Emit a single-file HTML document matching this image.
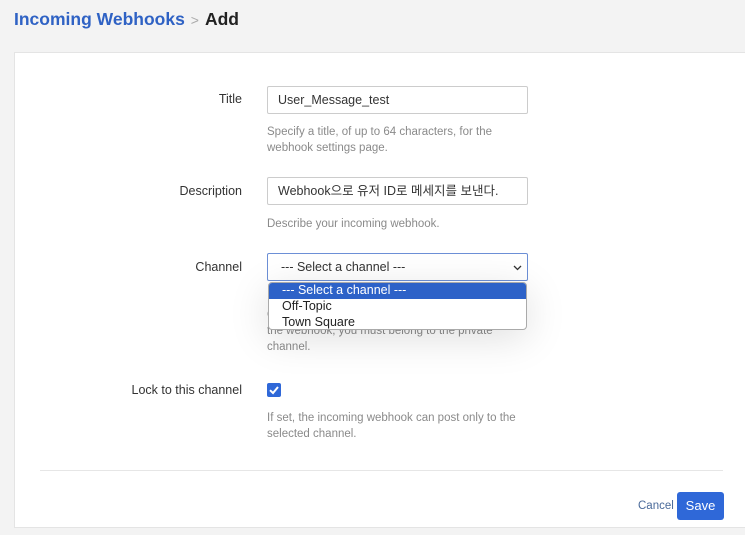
<!DOCTYPE html>
<html><head><meta charset="utf-8"><style>
*{box-sizing:border-box;margin:0;padding:0}
body{width:745px;height:535px;background:#f3f3f3;font-family:"Liberation Sans","Noto Sans CJK KR",sans-serif;position:relative;overflow:hidden;color:#3d3c40}
.a{position:absolute}
.crumb{left:14px;top:9px;font-size:17.5px;font-weight:bold;color:#2f62c4;white-space:nowrap}
.crumb .sep{color:#aaa;font-weight:normal;margin:0 6px 0 6px;font-size:14px}
.crumb .add{color:#222}
.panel{left:14px;top:52px;width:740px;height:476px;background:#fff;border:1px solid #e4e4e4}
.lbl{font-size:12.5px;color:#333;right:503px;text-align:right;white-space:nowrap}
.inp{left:267px;width:261px;height:28px;border:1px solid #ccc;border-radius:2px;font-size:12.5px;line-height:26px;padding:0 10px;color:#333;background:#fff;white-space:nowrap}
.help{left:267px;width:270px;font-size:11.5px;line-height:16px;color:#8a8a8a;white-space:nowrap}
</style></head><body>
<div class="a crumb">Incoming Webhooks<span class="sep">&gt;</span><span class="add">Add</span></div>
<div class="a panel"></div>
<div class="a lbl" style="top:92px">Title</div>
<div class="a inp" style="top:86px">User_Message_test</div>
<div class="a help" style="top:124px">Specify a title, of up to 64 characters, for the<br>webhook settings page.</div>
<div class="a lbl" style="top:184px">Description</div>
<div class="a inp" style="top:177px">Webhook으로 유저 ID로 메세지를 보낸다.</div>
<div class="a help" style="top:216px">Describe your incoming webhook.</div>
<div class="a lbl" style="top:260px">Channel</div>
<div class="a help" style="top:307px">Only public channels can be used. For private,<br>the webhook, you must belong to the private<br>channel.</div>
<div class="a inp" style="top:253px;border-color:#6c8fd6;padding-left:13px">--- Select a channel ---
<svg style="position:absolute;right:5px;top:11px" width="9" height="6" viewBox="0 0 9 6"><path d="M1 1L4.5 4.5L8 1" stroke="#333" stroke-width="1.3" fill="none"/></svg></div>
<div class="a" style="left:268px;top:282px;width:259px;height:48px;background:#fff;border:1px solid #aaa;border-radius:4px;font-size:12.5px;line-height:15.5px;overflow:hidden;box-shadow:0 8px 40px rgba(0,0,0,0.13)">
<div style="background:#2d62c8;color:#fff;padding-left:13px;height:16px">--- Select a channel ---</div>
<div style="padding-left:13px;color:#222">Off-Topic</div>
<div style="padding-left:13px;color:#222">Town Square</div>
</div>
<div class="a lbl" style="top:383px">Lock to this channel</div>
<div class="a" style="left:267px;top:383px;width:14px;height:14px;background:#2f68d8;border-radius:2px">
<svg width="14" height="14" viewBox="0 0 14 14" style="position:absolute;left:0;top:0"><path d="M3 7.2L6 10L11 4" stroke="#fff" stroke-width="2" fill="none"/></svg></div>
<div class="a help" style="top:410px">If set, the incoming webhook can post only to the<br>selected channel.</div>
<div class="a" style="left:40px;top:470px;width:683px;height:1px;background:#e6e6e6"></div>
<div class="a" style="left:638px;top:500px;font-size:11.5px;color:#4a6a9a">Cancel</div>
<div class="a" style="left:677px;top:492px;width:47px;height:28px;background:#2f68d8;border-radius:3px;color:#fff;font-size:13px;text-align:center;line-height:28px">Save</div>
</body></html>
